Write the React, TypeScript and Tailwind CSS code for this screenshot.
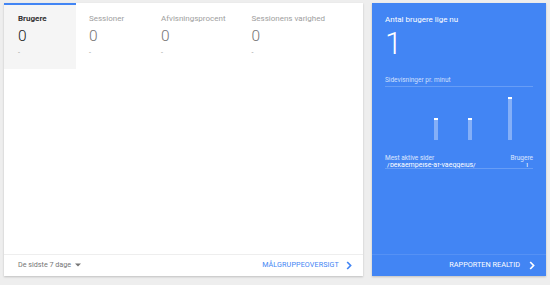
import React from 'react'

const tabs = [
  { label: 'Brugere', value: '0', active: true },
  { label: 'Sessioner', value: '0' },
  { label: 'Afvisningsprocent', value: '0' },
  { label: 'Sessionens varighed', value: '0' },
]

const bars = [
  { left: 49, height: 22 },
  { left: 83, height: 22 },
  { left: 123, height: 43 },
]

const Chevron = ({ className = '' }: { className?: string }) => (
  <svg width="6" height="9" viewBox="0 0 6 9" className={className}>
    <path d="M1.2 1 L4.6 4.5 L1.2 8" fill="none" stroke="currentColor" strokeWidth="1.7" />
  </svg>
)

export default function App() {
  return (
    <div
      className="w-[550px] h-[285px] bg-[#eeeeee] flex gap-[9px] pt-[3px] pl-[4px] overflow-hidden"
      style={{ fontFamily: 'Roboto, "Liberation Sans", sans-serif' }}
    >
      {/* Audience overview card */}
      <div className="w-[359px] h-[273px] bg-white shadow-[0_1px_2px_rgba(0,0,0,0.2)] flex flex-col">
        <div className="flex">
          {tabs.map((t) => (
            <div
              key={t.label}
              className={`min-w-[72px] h-[66px] border-t-2 ${
                t.active ? 'border-[#4285f4] bg-[#f5f5f5] pl-[14px] pr-[13px]' : 'border-transparent px-[13px]'
              }`}
            >
              <div
                className={`mt-[8px] text-[8px] leading-[12px] whitespace-nowrap ${
                  t.active ? 'font-bold text-[#333]' : 'text-[#9e9e9e]'
                }`}
              >
                {t.label}
              </div>
              <div
                className={`mt-[3px] text-[15.5px] leading-[16px] font-light ${
                  t.active ? 'text-[#212121]' : 'text-[#757575]'
                }`}
              >
                {t.value}
              </div>
              <div className="mt-[3px] text-[7px] leading-[12px] text-[#9e9e9e]">-</div>
            </div>
          ))}
        </div>
        <div className="flex-1" />
        <div className="h-[22px] border-t border-[#eeeeee] flex items-center justify-between pl-[14px] pr-[11px]">
          <div className="flex items-center gap-[4px] text-[7.2px] text-[#757575]">
            De sidste 7 dage
            <svg width="6" height="4" viewBox="0 0 6 4">
              <path d="M0 0.5 L6 0.5 L3 3.5 Z" fill="#757575" />
            </svg>
          </div>
          <div className="flex items-center gap-[7px] text-[7.2px] text-[#4285f4] tracking-[0.1px]">
            MÅLGRUPPEOVERSIGT
            <Chevron />
          </div>
        </div>
      </div>

      {/* Realtime card */}
      <div className="w-[174px] h-[273px] bg-[#4285f4] shadow-[0_1px_2px_rgba(0,0,0,0.2)] flex flex-col text-white">
        <div className="px-[13px] flex-1">
          <div className="mt-[11px] text-[8px] leading-[12px]">Antal brugere lige nu</div>
          <div className="mt-[2px] text-[31px] leading-[32px] font-light">1</div>
          <div className="mt-[15px] text-[6.5px] leading-[10px] text-white/75">Sidevisninger pr. minut</div>
          <div className="mt-[1px] border-t border-white/20 relative h-[54px]">
            {bars.map((b) => (
              <div
                key={b.left}
                className="absolute bottom-0 w-[4px] bg-white/35 border-t-2 border-white"
                style={{ left: b.left, height: b.height }}
              />
            ))}
          </div>
          <div className="mt-[14px] flex justify-between text-[6.5px] leading-[9px] text-white/80">
            <span>Mest aktive sider</span>
            <span>Brugere</span>
          </div>
          <div className="h-[6px] overflow-hidden border-b border-white/20 relative">
            <div className="absolute left-[2px] right-[4px] top-[-3px] flex justify-between text-[7px] leading-[10px]">
              <span>/bekaempelse-af-vaeggelus/</span>
              <span>1</span>
            </div>
          </div>
        </div>
        <div className="h-[22px] border-t border-white/10 flex items-center justify-end pr-[11px] gap-[9px] text-[7.3px]">
          RAPPORTEN REALTID
          <Chevron />
        </div>
      </div>
    </div>
  )
}
